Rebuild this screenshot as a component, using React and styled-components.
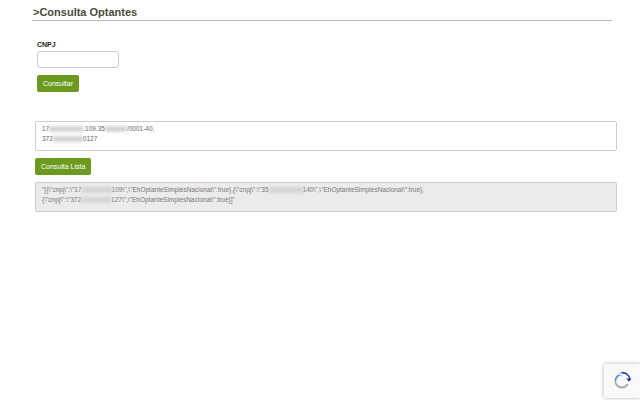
import React from 'react';
import styled, { createGlobalStyle } from 'styled-components';

const Global = createGlobalStyle`
  body { margin: 0; background: #fff; font-family: "Liberation Sans", Arial, sans-serif; color: #333; }
`;

const Page = styled.div`
  width: 640px;
  height: 400px;
  position: relative;
  overflow: hidden;
  padding: 4px 28px 0 32px;
  box-sizing: border-box;
`;

const Header = styled.h2`
  margin: 0;
  font-size: 11px;
  font-weight: bold;
  color: #4a4a3a;
  padding: 2px 0 2px 1px;
  border-bottom: 1px solid #b8bcae;
`;

const Form = styled.div`
  padding: 20px 0 0 5px;
  display: flex;
  flex-direction: column;
  align-items: flex-start;
`;

const Label = styled.label`
  font-size: 7px;
  font-weight: bold;
  color: #222;
  margin-bottom: 3px;
`;

const Input = styled.div`
  width: 80px;
  height: 15px;
  border: 1px solid #ccc;
  border-radius: 3px;
`;

const Button = styled.button`
  background: #6b9a1f;
  color: #fff;
  border: none;
  border-radius: 2px;
  font-family: inherit;
  font-size: 7px;
  padding: 0 6px;
  height: 17px;
  margin-top: ${p => p.$mt || 0}px;
  cursor: pointer;
`;

const Section = styled.div`
  padding: 29px 7px 0 3px;
  display: flex;
  flex-direction: column;
  align-items: flex-start;
`;

const Box = styled.div`
  width: 568px;
  min-height: 24px;
  border: 1px solid #ccc;
  border-radius: 2px;
  background: ${p => p.$gray ? '#ebebeb' : '#fff'};
  font-size: 6.5px;
  line-height: 10px;
  color: ${p => p.$gray ? '#777' : '#666'};
  padding: 2px 6px;
  margin-top: ${p => p.$mt || 0}px;
  box-sizing: content-box;
`;

const Blur = styled.span`
  display: inline-block;
  width: ${p => p.$w}px;
  height: 6px;
  background: #d4d4d4;
  filter: blur(1.5px);
  vertical-align: middle;
`;

const Badge = styled.div`
  position: absolute;
  right: 0;
  top: 364px;
  width: 36px;
  height: 34px;
  background: #f9f9f9;
  box-shadow: 0 0 4px rgba(0,0,0,0.3);
  border-radius: 2px 0 0 2px;
  display: flex;
  align-items: center;
  justify-content: center;
`;

export default function App() {
  return (
    <Page>
      <Global />
      <Header>&gt;Consulta Optantes</Header>
      <Form>
        <Label>CNPJ</Label>
        <Input />
        <Button $mt={7}>Consultar</Button>
      </Form>
      <Section>
        <Box>
          17<Blur $w={34} />.109.35<Blur $w={22} />/0001-40,<br />
          372<Blur $w={30} />0127
        </Box>
        <Button $mt={7}>Consulta Lista</Button>
        <Box $gray $mt={7}>
          "[{'{'}\"cnpj\":\"17<Blur $w={30} />109\",\"EhOptanteSimplesNacional\":true},{'{'}\"cnpj\":\"35<Blur $w={34} />140\",\"EhOptanteSimplesNacional\":true},<br />
          {'{'}\"cnpj\":\"372<Blur $w={30} />127\",\"EhOptanteSimplesNacional\":true}]"
        </Box>
      </Section>
      <Badge>
        <svg width="20" height="20" viewBox="0 0 24 24">
          <path d="M12 3a9 9 0 0 1 8.5 6H17l3.5 4 3-4h-1.5A11 11 0 0 0 12 1z" fill="#1c3aa9" />
          <path d="M3 12a9 9 0 0 1 9-9V1L8 4l4 3V5a7 7 0 0 0-7 7z" fill="#4a90e2" />
          <path d="M3 12a9 9 0 0 0 9 9 9 9 0 0 0 8-5l-2-1a7 7 0 0 1-13-3z" fill="#aaa" />
        </svg>
      </Badge>
    </Page>
  );
}
